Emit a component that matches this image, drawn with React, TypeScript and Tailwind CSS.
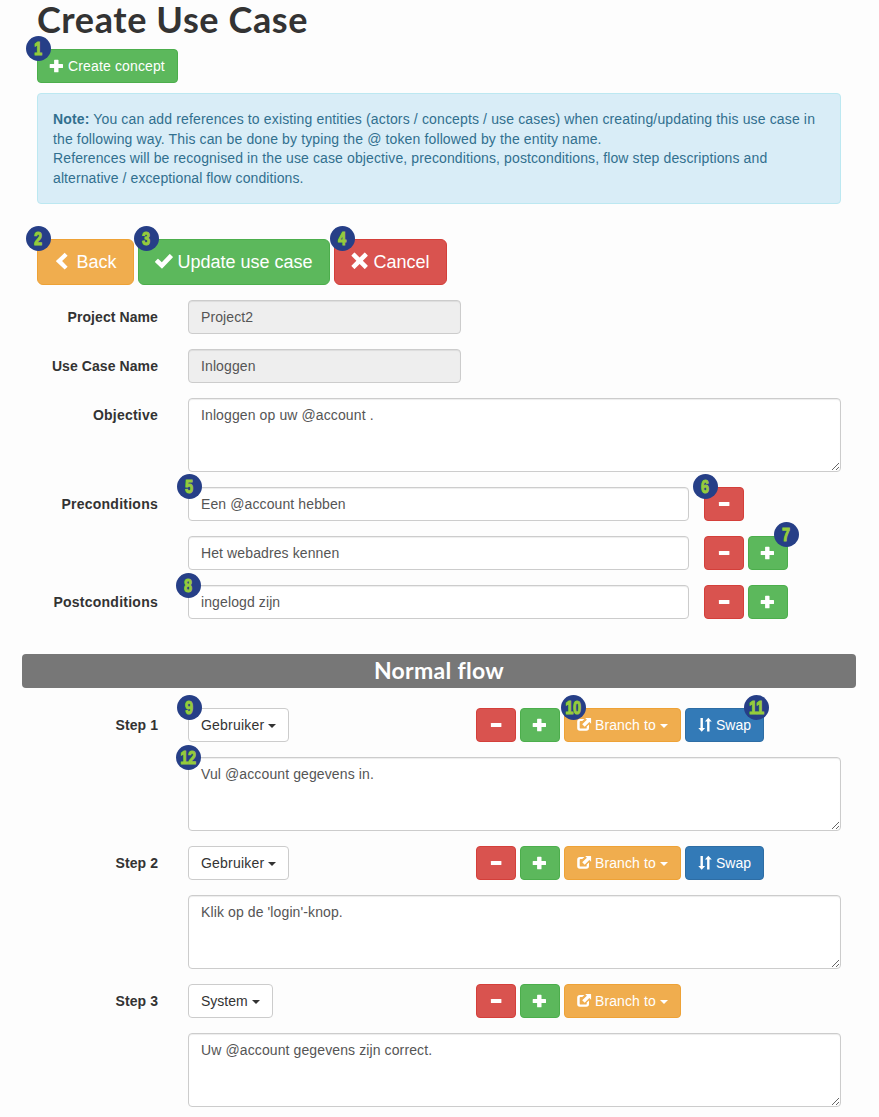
import type { ReactNode } from "react";

const icons: Record<string, ReactNode> = {
  plus: <path d="M4.700.700h3.200q.6 0 .6.600v3.600h3.900q.6 0 .6.600v2.900q0 .600-.6.600H8.500v3.700q0 .600-.6.600H4.700q-.6 0-.6-.600V9H.300q-.6 0-.6-.600V5.500q0-.600.6-.600h3.800V1.300q0-.600.6-.600z" />,
  minus: <path d="M2.500 5h9.300q.6 0 .6.600v2.800q0 .600-.6.600H2.500q-.6 0-.6-.600V5.600q0-.600.6-.600z" />,
  left: <path d="M8.300-.1 10.600 2.100 6.300 6.300l4.300 4.300-2.300 2.200L1.700 6.600q-.3-.3 0-.6z" />,
  ok: <path d="M.100 6.600 2 4.700q.3-.3.600 0L5.300 7.200 11.200 1q.3-.3.600 0l2 1.900q.3.300 0 .600L5.800 11.800q-.4.400-.8 0L.1 7.200q-.3-.3 0-.6z" />,
  remove: <path d="m3-.2 3.700 3.700L10.400-.2q.3-.3.600 0l1.900 1.900q.3.300 0 .600L9.200 6l3.700 3.700q.3.300 0 .600L11 12.200q-.3.300-.6 0L6.700 8.500 3 12.200q-.3.300-.6 0L.5 10.300q-.3-.3 0-.6L4.200 6 .5 2.300q-.3-.3 0-.6L2.400-.2q.3-.3.600 0z" />,
  share: (
    <>
      <path d="M7.400.900 5.300 3H3.600q-.9 0-.9.900v5.800q0 .9.900.900h5.200q.9 0 .9-.900V8.600l2.300-2.200v3.700q0 2.700-2.700 2.700H2.900Q.2 12.800.2 10.100V3.600Q.2.900 2.900.900z" />
      <path d="M8.200-.1h5.400q.5 0 .5.500v5.400L12.300 4.100 7.700 8.700 5.200 6.200 9.900 1.700z" />
    </>
  ),
  sort: <path d="M2.500 0h2.400v9.900h2.200L3.700 13.800.3 9.900h2.200zM10.300-.3l3.500 3.900h-2.300v9.800H9.100V3.600H6.900z" />,
};

function Icon({ name, large = false }: { name: string; large?: boolean }) {
  return (
    <svg viewBox="0 0 14 14" fill="currentColor" className={large ? "size-[18px] shrink-0 overflow-visible" : "size-3.5 shrink-0 overflow-visible"}>
      {icons[name]}
    </svg>
  );
}

function Badge({ n, at = "-left-[11px] -top-[13px]" }: { n: number; at?: string }) {
  return (
    <span className={`absolute z-10 flex size-[25px] items-center justify-center rounded-full bg-[#263f87] font-['Liberation_Sans',sans-serif] text-[18.5px] leading-none font-bold text-[#96cb3c] ${at}`}>
      <span className="mt-px mr-px scale-x-[.78] tracking-[-0.3px] [-webkit-text-stroke:1.1px_#96cb3c]">{n}</span>
    </span>
  );
}

const tones = {
  green: "bg-[#5cb85c] border-[#4cae4c] text-white",
  red: "bg-[#d9534f] border-[#d43f3a] text-white",
  orange: "bg-[#f0ad4e] border-[#eea236] text-white",
  blue: "bg-[#337ab7] border-[#2e6da4] text-white",
  white: "bg-white border-[#ccc] text-[#333]",
};

function Button({ tone, icon, children, large = false, caret = false, badge, width, spacing = "" }: {
  tone: keyof typeof tones; icon?: string; children?: ReactNode; large?: boolean; caret?: boolean; badge?: ReactNode; width: string; spacing?: string;
}) {
  return (
    <div className={`relative shrink-0 ${width}`}>
      <button className={`flex w-full items-center whitespace-nowrap border ${tones[tone]} ${spacing} ${large ? "h-[46px] gap-[4.5px] rounded-md px-4 text-[18px]" : "h-[34px] gap-1 rounded px-3 text-sm"}`}>
        {icon && <Icon name={icon} large={large} />}
        {children}
        {caret && <span className="mt-px size-0 border-x-4 border-t-4 border-x-transparent border-t-current" />}
      </button>
      {badge}
    </div>
  );
}

function Field({ label, children, spacing = "tracking-[0.08px]" }: { label: string; children: ReactNode; spacing?: string }) {
  return (
    <div className="mb-[15px] flex">
      <div className={`mr-[30px] w-[121px] shrink-0 pt-[7px] text-right font-bold ${spacing}`}>{label}</div>
      {children}
    </div>
  );
}

const control = "block rounded border border-[#ccc] px-3 py-1.5 text-sm leading-5 tracking-[0.11px] text-[#555] shadow-[inset_0_1px_1px_rgba(0,0,0,0.075)] outline-none";

function Condition({ label, value, badge, plus = true, minusBadge, plusBadge }: {
  label: string; value: string; badge?: ReactNode; plus?: boolean; minusBadge?: ReactNode; plusBadge?: ReactNode;
}) {
  return (
    <Field label={label} spacing="tracking-[0.25px]">
      <div className="relative mr-[15px] w-[501px]">
        <input className={`${control} h-[34px] w-full bg-white`} defaultValue={value} />
        {badge}
      </div>
      <div className="flex gap-1">
        <Button tone="red" icon="minus" width="w-10" badge={minusBadge} />
        {plus && <Button tone="green" icon="plus" width="w-10" badge={plusBadge} />}
      </div>
    </Field>
  );
}

function Step({ n, actor, text, swap = true, badges = false }: { n: number; actor: string; text: string; swap?: boolean; badges?: boolean }) {
  return (
    <>
      <Field label={`Step ${n}`}>
        <div className="w-[288px]">
          <Button tone="white" caret spacing={actor === "System" ? "" : "tracking-[0.22px]"} width={actor === "System" ? "w-[85px]" : "w-[101px]"} badge={badges && <Badge n={9} />}>
            {actor}
          </Button>
        </div>
        <div className="flex gap-1">
          <Button tone="red" icon="minus" width="w-10" />
          <Button tone="green" icon="plus" width="w-10" />
          <Button tone="orange" icon="share" caret spacing="tracking-[0.1px]" width="w-[117px]" badge={badges && <Badge n={10} at="-left-[3px] -top-[13px]" />}>Branch to</Button>
          {swap && <Button tone="blue" icon="sort" width="w-[79px]" badge={badges && <Badge n={11} at="left-[59px] -top-[13px]" />}>Swap</Button>}
        </div>
      </Field>
      <Field label="">
        <div className="relative">
          <textarea className={`${control} h-[74px] w-[653px] resize bg-white`} defaultValue={text} />
          {badges && <Badge n={12} at="-left-3 -top-3" />}
        </div>
      </Field>
    </>
  );
}

export default function App() {
  return (
    <main className="h-[1117px] w-[879px] overflow-hidden bg-[#fdfdfd] px-[22px] font-['Liberation_Sans',Arial,sans-serif] text-sm leading-5 text-[#333]">
      <div className="px-[15px]">
        <h1 className="mb-[10px] h-[39px] whitespace-nowrap font-['Lato',sans-serif] text-[36px] leading-[39px] font-bold tracking-[0.6px]">Create Use Case</h1>
        <Button tone="green" icon="plus" spacing="tracking-[0.14px]" width="w-[141px]" badge={<Badge n={1} />}>Create concept</Button>
        <div className="mt-2.5 h-[111px] w-[804px] whitespace-nowrap rounded border border-[#bce8f1] bg-[#d9edf7] px-[15px] pt-4 leading-[19.7px] text-[#31708f]">
          <p className="tracking-[0.143px]"><b>Note:</b> You can add references to existing entities (actors / concepts / use cases) when creating/updating this use case in</p>
          <p className="tracking-[0.13px]">the following way. This can be done by typing the @ token followed by the entity name.</p>
          <p className="tracking-[0.115px]">References will be recognised in the use case objective, preconditions, postconditions, flow step descriptions and</p>
          <p className="tracking-[0.09px]">alternative / exceptional flow conditions.</p>
        </div>
        <div className="mt-[35px] mb-[15px] flex gap-1">
          <Button large tone="orange" icon="left" width="w-[97px]" badge={<Badge n={2} />}>Back</Button>
          <Button large tone="green" icon="ok" width="w-48" badge={<Badge n={3} at="-left-1 -top-[13px]" />}>Update use case</Button>
          <Button large tone="red" icon="remove" width="w-[113px]" badge={<Badge n={4} at="-left-1 -top-[13px]" />}>Cancel</Button>
        </div>
        <Field label="Project Name"><input readOnly className={`${control} h-[34px] w-[273px] bg-[#eee]`} value="Project2" /></Field>
        <Field label="Use Case Name"><input readOnly className={`${control} h-[34px] w-[273px] bg-[#eee]`} value="Inloggen" /></Field>
        <Field label="Objective" spacing="tracking-[0.22px]"><textarea className={`${control} h-[74px] w-[653px] resize bg-white`} defaultValue="Inloggen op uw @account ." /></Field>
        <Condition label="Preconditions" value="Een @account hebben" plus={false} badge={<Badge n={5} />} minusBadge={<Badge n={6} />} />
        <Condition label="" value="Het webadres kennen" plusBadge={<Badge n={7} at="left-[26px] -top-3.5" />} />
        <Condition label="Postconditions" value="ingelogd zijn" badge={<Badge n={8} at="-left-3 -top-3" />} />
      </div>
      <h2 className="mt-[35px] mb-5 h-[34px] w-[834px] rounded bg-[#777] text-center font-['Lato',sans-serif] text-[23px] leading-[33px] font-bold tracking-[0.3px] text-white">Normal flow</h2>
      <div className="px-[15px]">
        <Step n={1} actor="Gebruiker" text="Vul @account gegevens in." badges />
        <Step n={2} actor="Gebruiker" text="Klik op de 'login'-knop." />
        <Step n={3} actor="System" text="Uw @account gegevens zijn correct." swap={false} />
      </div>
    </main>
  );
}
